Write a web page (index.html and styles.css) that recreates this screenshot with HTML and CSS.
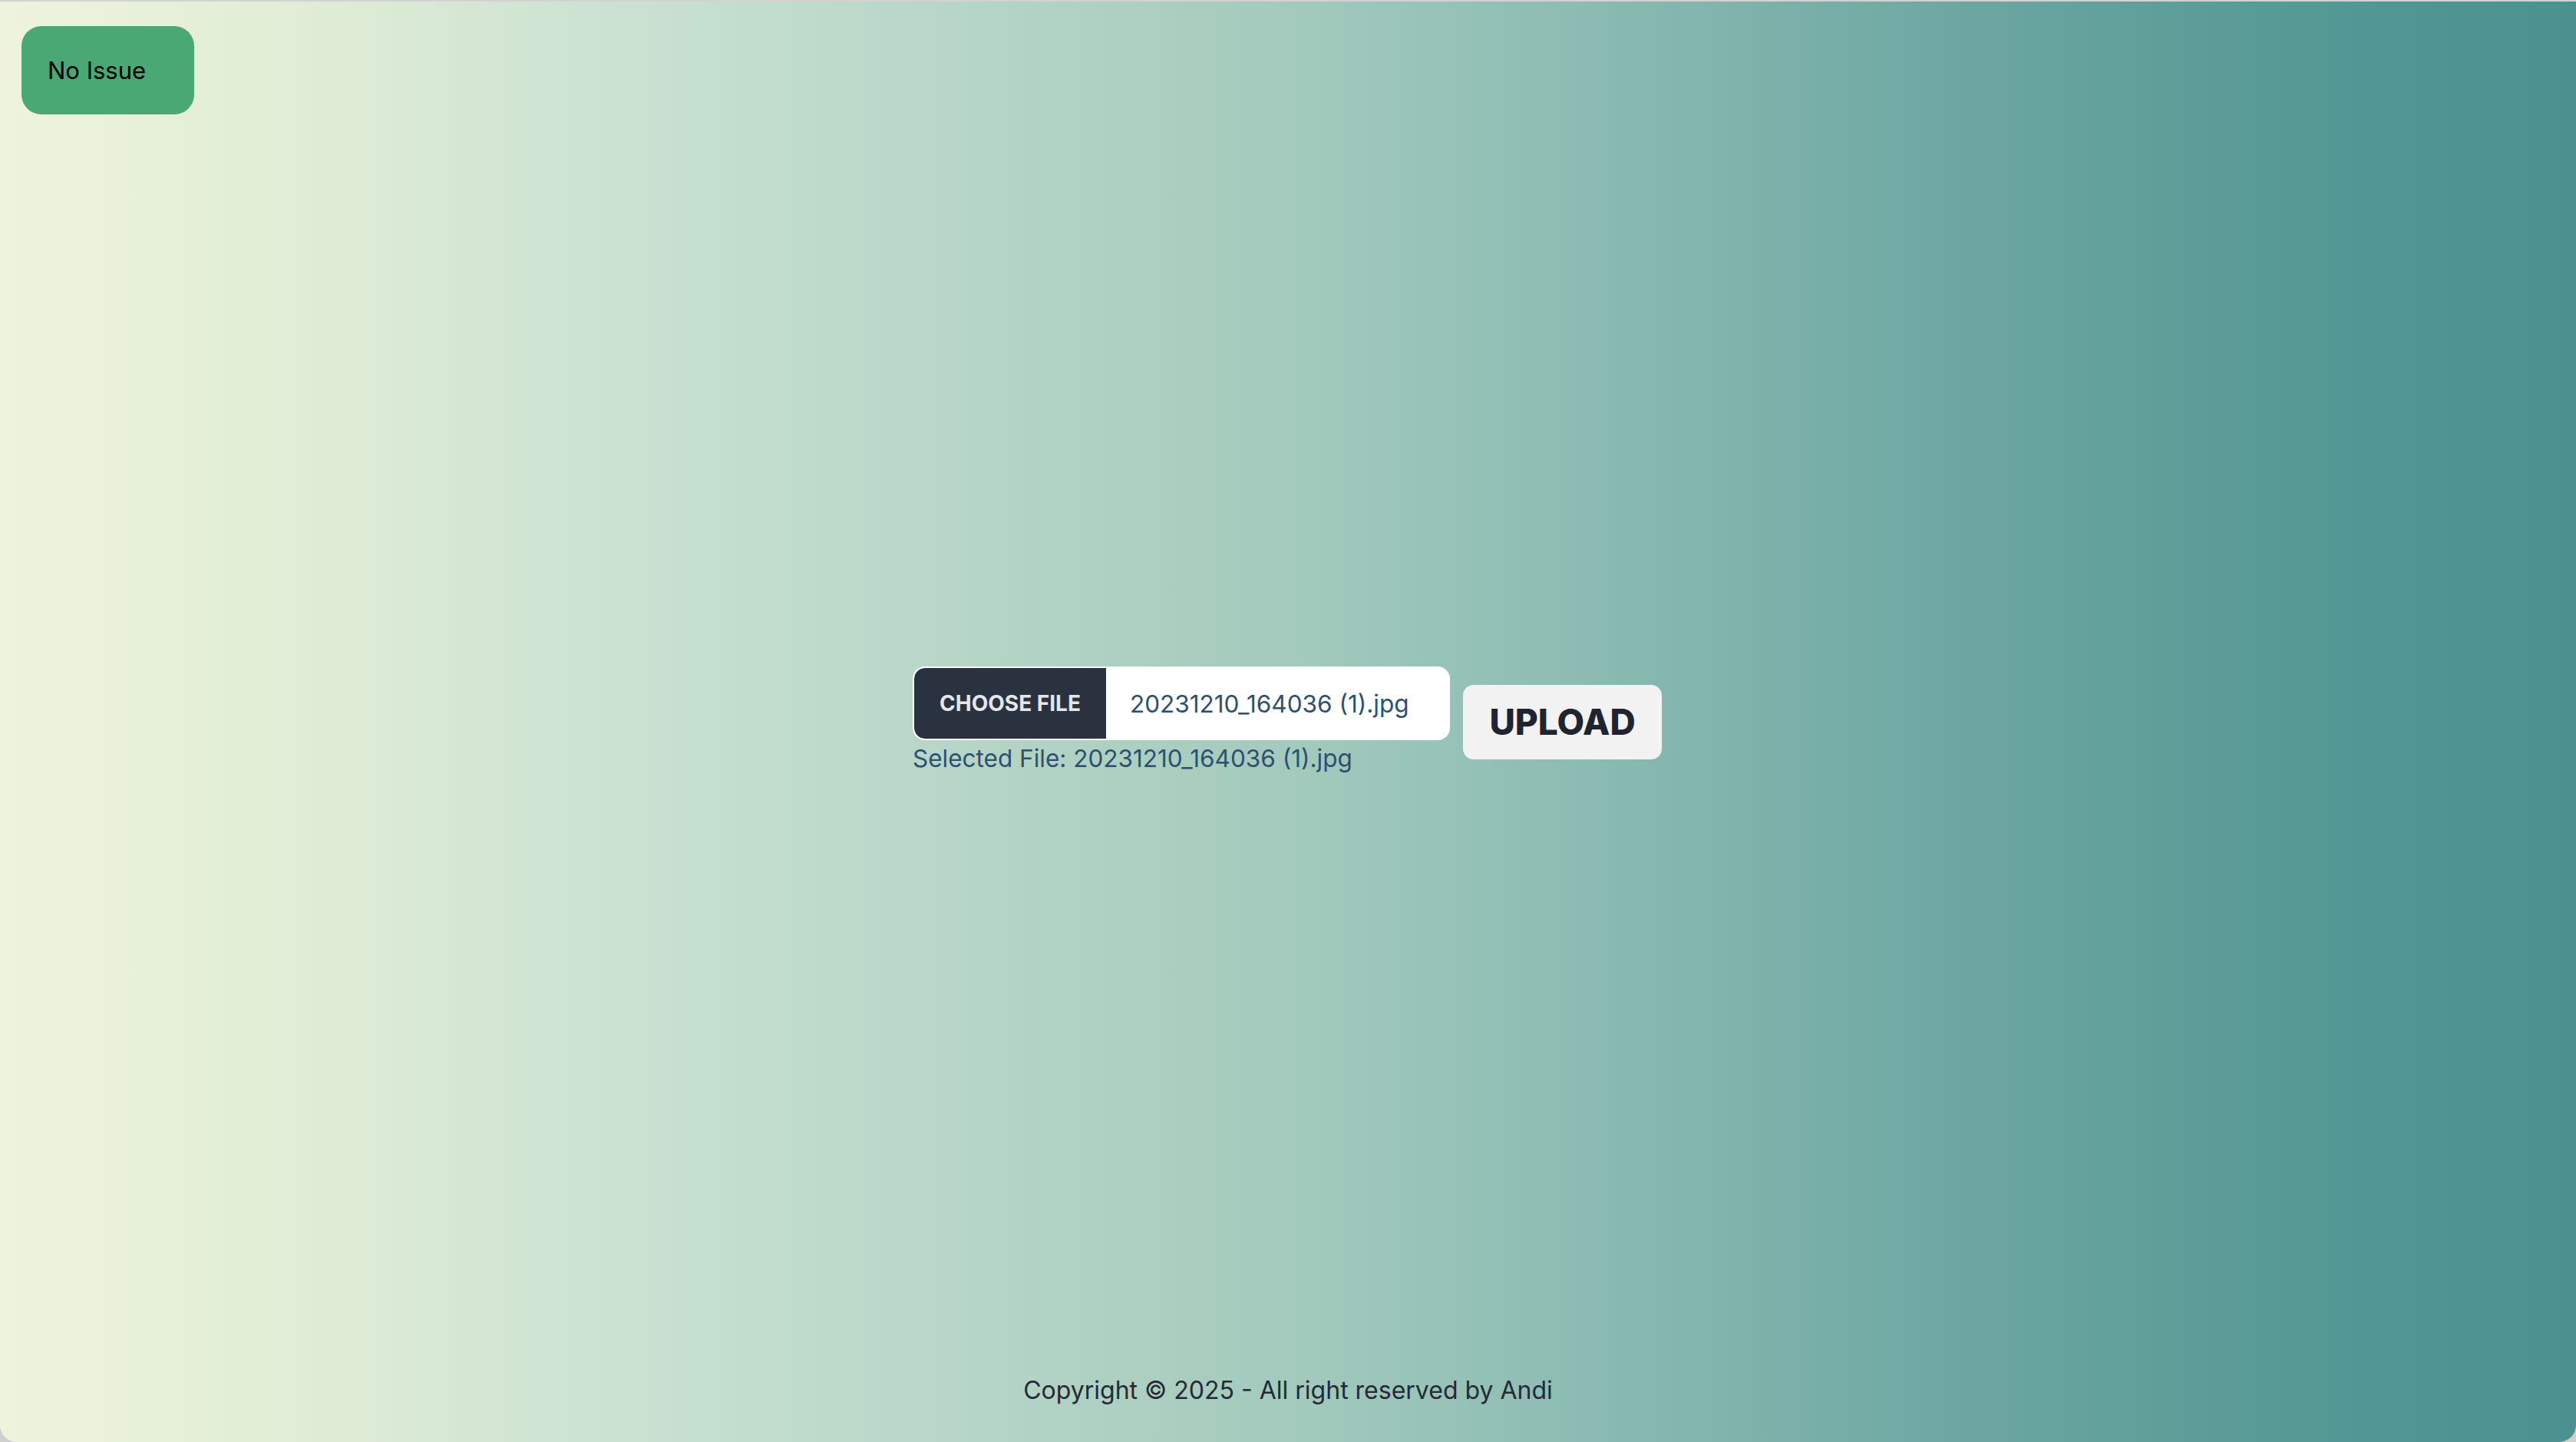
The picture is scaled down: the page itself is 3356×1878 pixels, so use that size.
FILE: index.html
```html
<!DOCTYPE html>
<html lang="en">
<head>
<meta charset="utf-8">
<title>Upload</title>
<link rel="stylesheet" href="styles.css">
</head>
<body>
<div class="frame">
  <div class="status">No Issue</div>
  <main class="center">
    <div class="uploader">
      <div class="picker">
        <label class="file-input">
          <span class="file-btn">Choose File</span>
          <span class="file-name">20231210_164036 (1).jpg</span>
        </label>
        <p class="selected">Selected File: 20231210_164036 (1).jpg</p>
      </div>
      <button class="upload" type="button">UPLOAD</button>
    </div>
  </main>
  <footer class="footer">Copyright © 2025 - All right reserved by Andi</footer>
</div>
</body>
</html>
```

FILE: styles.css
```css
html, body {
  margin: 0;
  padding: 0;
  height: 100%;
  background: #cfcfcf;
}

body {
  font-family: Inter, "Liberation Sans", sans-serif;
}

.frame {
  box-sizing: border-box;
  height: 100vh;
  border-top: 2px solid #d2d2d2;
  border-radius: 0 0 22px 22px;
  background: linear-gradient(to right,
    #eef4db 0%,
    #dfecd5 12.7%,
    #c7e0d1 25.5%,
    #b5d5c6 38%,
    #a1c9bc 51%,
    #86b8b0 64%,
    #6ca6a1 76.5%,
    #569995 89%,
    #4a9190 100%);
  display: grid;
  grid-template-rows: 1fr auto 1fr;
}

.status {
  justify-self: start;
  align-self: start;
  margin: 32px 0 0 28px;
  width: 225px;
  height: 115px;
  box-sizing: border-box;
  padding-left: 34px;
  display: flex;
  align-items: center;
  background: #4aa874;
  border-radius: 26px;
  color: #000;
  font-size: 31px;
}

.center {
  display: flex;
  justify-content: center;
  align-items: center;
}

.uploader {
  display: flex;
  align-items: center;
  gap: 17px;
  margin-left: -2px;
}

.picker {
  display: flex;
  flex-direction: column;
}

.file-input {
  box-sizing: border-box;
  width: 700px;
  height: 96px;
  border: 2px solid #fff;
  border-radius: 16px;
  background: #fff;
  display: flex;
  align-items: stretch;
  overflow: hidden;
}

.file-btn {
  width: 250px;
  flex: none;
  display: flex;
  align-items: center;
  justify-content: center;
  background: #2b323f;
  color: #e4e6ea;
  font-weight: 700;
  font-size: 28px;
  text-transform: uppercase;
  border-radius: 14px 0 0 14px;
}

.file-name {
  display: flex;
  align-items: center;
  padding-left: 31px;
  color: #2f4f70;
  font-size: 31.5px;
}

.selected {
  margin: 0;
  color: #2f4f70;
  font-size: 31.5px;
  line-height: 48px;
}

.upload {
  width: 259px;
  height: 97px;
  border: none;
  border-radius: 14px;
  background: #f2f2f2;
  color: #1f2430;
  font-family: Inter, "Liberation Sans", sans-serif;
  font-weight: 800;
  font-size: 46px;
  padding: 0;
}

.footer {
  align-self: end;
  text-align: center;
  color: #252a35;
  font-size: 32px;
  line-height: 48px;
  padding-bottom: 43px;
}
```
